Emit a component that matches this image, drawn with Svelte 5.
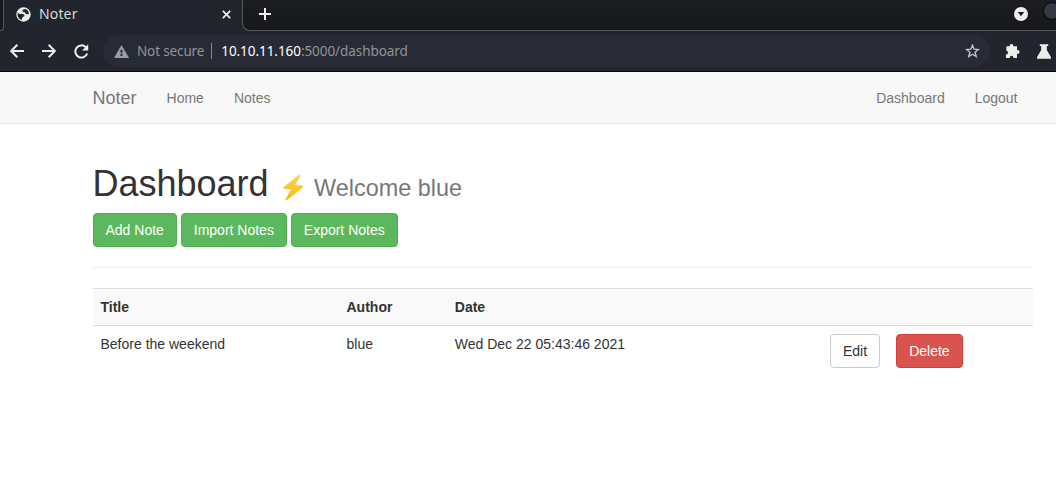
<script>
  const actions = ['Add Note', 'Import Notes', 'Export Notes'];
  const notes = [{ title: 'Before the weekend', author: 'blue', date: 'Wed Dec 22 05:43:46 2021' }];
</script>

<div class="chrome">
  <div class="tabs">
    <div class="edge"></div>
    <div class="tab">
      <svg class="globe" width="15" height="15" viewBox="0 0 15 15">
        <circle cx="7.5" cy="7.5" r="7.2" fill="#eeeeec" />
        <path d="M1.7 5.2Q2.6 7.2 4.4 6.9 6 6.5 7.3 7.2 8.8 7.7 8.4 8.8 8 9.8 6.7 10.2 5.7 10.7 5.8 12.9 3 12.2 2 9.7 1.4 7.6 1.7 5.2Z" fill="#23252e" />
        <path d="M8.6 1.9Q6.2 2.6 6.3 3.8 6.5 5 8.2 5.1 9.4 5.6 9.6 6.8 10.9 7.4 13 6.9 12.9 3.9 10.6 2.5 9.6 1.8 8.6 1.9Z" fill="#23252e" />
      </svg>
      <span class="tab-title">Noter</span>
      <svg class="close" width="9" height="9" viewBox="0 0 9 9"><path d="M.8.8 8.2 8.2M8.2.8.8 8.2" stroke="#eeeeec" stroke-width="1.7" /></svg>
    </div>
    <div class="strip">
      <svg class="plus" width="12" height="12" viewBox="0 0 12 12"><path d="M6 0V12M0 6H12" stroke="#eeeeec" stroke-width="2" /></svg>
      <svg class="menu" width="14" height="14" viewBox="0 0 14 14"><circle cx="7" cy="7" r="7" fill="#eeeeec" /><path d="M3.8 5H10.2L7 9.2Z" fill="#18191d" /></svg>
      <span class="window-dot"></span>
    </div>
  </div>
  <div class="toolbar">
    <svg width="14" height="14" viewBox="0 0 14 14"><path d="M14 7H1.5M7.3 .8 1.2 7l6.1 6.2" fill="none" stroke="#eeeeec" stroke-width="2" /></svg>
    <svg width="14" height="14" viewBox="0 0 14 14"><path d="M0 7H12.5M6.7 .8 12.8 7l-6.1 6.2" fill="none" stroke="#eeeeec" stroke-width="2" /></svg>
    <svg class="reload" width="15" height="15" viewBox="0 0 15 15"><path d="M13.2 9.5A6.1 6.1 0 1 1 11.8 3.2" fill="none" stroke="#eeeeec" stroke-width="2" /><path d="M14.2 .3V6.5H8.1Z" fill="#eeeeec" /></svg>
    <div class="address">
      <svg width="15" height="13" viewBox="0 0 15 13"><path d="M7.5 0 15 13H0Z" fill="#9b9da2" /><path d="M7.5 4.8V7.8M7.5 8.8V11" stroke="#282a35" stroke-width="2" /></svg>
      <span class="insecure">Not secure</span>
      <span class="divider"></span>
      <span class="url"><b>10.10.11.160</b>:5000/dashboard</span>
      <svg class="star" width="15" height="14" viewBox="0 0 15 14"><path d="M7.5 1.3 9.1 5.2 13.4 5.5 10.1 8.2 11.2 12.5 7.5 10.2 3.8 12.5 4.9 8.2 1.6 5.5 5.9 5.2Z" fill="none" stroke="#c4c5c6" stroke-width="1.4" /></svg>
    </div>
    <svg class="puzzle" width="15" height="15" viewBox="0 0 15 15"><path d="M1.4 2.3H4.6V2A1.9 1.9 0 0 1 8.4 2V2.3H12V6H12.6A1.9 1.9 0 0 1 12.6 9.8H12V14H8.4V13.5A1.8 1.8 0 0 0 4.8 13.5V14H.9V10.4H1.2A1.8 1.8 0 0 0 1.2 6.7H1.4Z" fill="#eeeeec" /></svg>
    <svg class="flask" width="14" height="15" viewBox="0 0 14 15"><path d="M2.8 .3H11.2V2H9.8V6L14 13.2V14.8H0V13.2L4.2 6V2H2.8Z" fill="#eeeeec" /></svg>
  </div>
</div>

<nav>
  <div class="container navrow">
    <span class="brand">Noter</span>
    <span>Home</span>
    <span>Notes</span>
    <span class="right">Dashboard</span>
    <span>Logout</span>
  </div>
</nav>

<main class="container">
  <h1>Dashboard
    <small><svg class="bolt" width="26" height="28" viewBox="0 0 26 28">
      <defs><linearGradient id="spark" x1="0" y1="0" x2="0" y2="1"><stop offset="0" stop-color="#fdd34b" /><stop offset="1" stop-color="#fbb916" /></linearGradient></defs>
      <path d="M18.6 1.1 3.4 13.3Q2.3 14.6 3.9 14.8L10.8 15.7 5.4 25.2Q5.4 27.2 7.1 26.1L23 13.5Q24 12.1 22.3 11.8L15.1 11 20.2 2.4Q20.5.2 18.6 1.1Z" fill="url(#spark)" />
    </svg> Welcome blue</small>
  </h1>
  <div class="actions">
    {#each actions as action}<button class="success">{action}</button>{/each}
  </div>
  <hr />
  <table>
    <colgroup><col class="c1" /><col class="c2" /><col class="c3" /><col class="c4" /><col /></colgroup>
    <thead><tr><th>Title</th><th>Author</th><th>Date</th><th></th><th></th></tr></thead>
    <tbody>
      {#each notes as note}
        <tr><td>{note.title}</td><td>{note.author}</td><td>{note.date}</td><td><button class="default">Edit</button></td><td><button class="danger">Delete</button></td></tr>
      {/each}
    </tbody>
  </table>
</main>

<style>
  :global(body) { margin: 0; background: #fff; overflow: hidden; color: #333; font: 14px/20px "Liberation Sans", Arial, sans-serif; }
  :global(*) { box-sizing: border-box; }
  svg { display: block; flex: none; }
  .chrome { height: 72px; background: #23252e; border-bottom: 1px solid #08090b; font-family: "Noto Sans", sans-serif; overflow: hidden; }
  .tabs { height: 31px; display: flex; }
  .edge { width: 4px; background: #18191d; border: solid #55575b; border-width: 0 1px 1px 0; border-bottom-right-radius: 7px; }
  .tab { width: 238px; display: flex; align-items: center; padding: 0 11px 3px 12px; }
  .globe { margin-left: -0.5px; }
  .tab-title { color: #d8d9da; font-size: 14px; letter-spacing: 0.15px; margin-left: 8.5px; }
  .close { margin-left: auto; }
  .strip { flex: 1; min-width: 0; display: flex; align-items: center; background: linear-gradient(#1c1d22, #17181b); border: solid #55575b; border-width: 0 0 1px 1px; border-bottom-left-radius: 8px; padding: 0 0 2px 16px; overflow: hidden; }
  .menu { margin-left: auto; }
  .window-dot { flex: none; width: 18px; height: 18px; border: 1px solid #050507; border-radius: 50%; background: #353945; margin: 0 -5px 6px 15px; }
  .toolbar { height: 40px; display: flex; align-items: center; padding-left: 10px; }
  .toolbar > svg + svg { margin-left: 18px; }
  .address { width: 887px; height: 32px; margin-left: 14px; border-radius: 16px; background: #282a35; display: flex; align-items: center; padding: 0 10.5px; color: #929499; }
  .insecure { margin-left: 8.5px; font-size: 13.5px; letter-spacing: -0.14px; }
  .divider { width: 1px; height: 16px; background: #85878c; margin: 0 9px 0 7px; }
  .url { font-size: 13.5px; letter-spacing: -0.06px; }
  .url b { color: #fff; font-weight: 400; }
  .star { margin-left: auto; }
  .puzzle { margin-left: 15px; }
  .toolbar > .flask { margin-left: 17px; }
  .container { width: 940px; margin-left: 92.5px; }
  nav { height: 52px; background: #f8f8f8; border-bottom: 1px solid #e7e7e7; color: #777; }
  .navrow { display: flex; gap: 30px; align-items: center; height: 52px; padding-right: 15px; }
  .brand { font-size: 18px; }
  .right { margin-left: auto; }
  h1 { margin: 40px 0 9px; height: 40px; font-size: 36px; line-height: 40px; font-weight: 500; white-space: nowrap; }
  small { font-size: 23.4px; line-height: 1; font-weight: 400; color: #777; }
  .bolt { display: inline-block; vertical-align: -6px; margin: 0 2px 0 1px; }
  .actions { display: flex; gap: 3.9px; }
  button { font: 14px/20px "Liberation Sans", Arial, sans-serif; height: 34px; padding: 6px 12px; border: 1px solid; border-radius: 4px; display: block; white-space: nowrap; }
  .success { color: #fff; background: #5cb85c; border-color: #4cae4c; }
  .default { color: #333; background: #fff; border-color: #ccc; }
  .danger { color: #fff; background: #d9534f; border-color: #d43f3a; min-width: 67px; }
  hr { border: 0; border-top: 1px solid #eee; margin: 20px 0; }
  table { width: 940px; border-collapse: separate; border-spacing: 0; table-layout: fixed; }
  .c1 { width: 246px; } .c2 { width: 108.3px; } .c3 { width: 375.1px; } .c4 { width: 66px; }
  th, td { border-top: 1px solid #ddd; padding: 8px; text-align: left; vertical-align: top; }
  th { height: 37px; background: #f9f9f9; }
</style>
